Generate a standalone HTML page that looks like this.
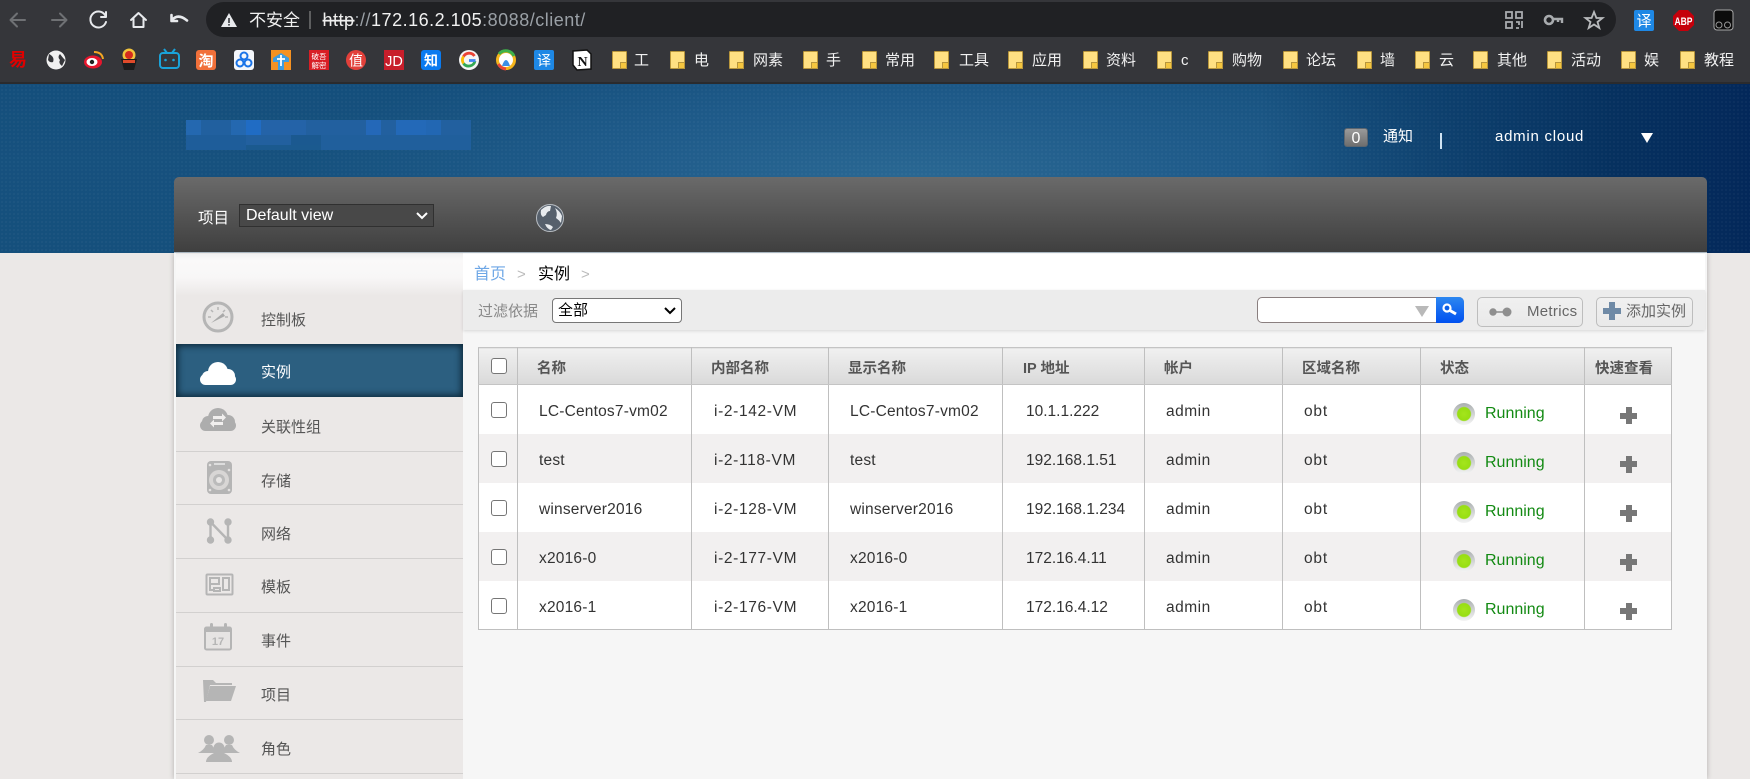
<!DOCTYPE html>
<html lang="zh-CN"><head><meta charset="utf-8"><title>实例</title>
<style>
*{box-sizing:border-box}
html,body{margin:0;padding:0;width:1750px;height:779px;overflow:hidden;background:#ebe8e7;font-family:"Liberation Sans","Noto Sans CJK SC",sans-serif}
.a{position:absolute}
.t{position:absolute;white-space:nowrap;line-height:20px;height:20px}
#toolbar{left:0;top:0;width:1750px;height:37px;background:#35363a}
#url{left:206px;top:2px;width:1410px;height:35px;background:#202124;border-radius:18px}
#bm{left:0;top:37px;width:1750px;height:47px;background:#35363a;border-bottom:2px solid #2a2b2e}
.bk{color:#f1f1f1;font-size:15px;top:51px}
.fd{position:absolute;top:51px;width:15px;height:18px;background:#ffe082;border:1px solid #b8963c;border-radius:1px}
.fd:after{content:"";position:absolute;right:-1px;bottom:-1px;width:5px;height:5px;background:#f5c63f;border:1px solid #b8963c}
#hdr{left:0;top:84px;width:1750px;height:169px;background-color:#165a8c;background-image:radial-gradient(rgba(255,255,255,.03) 1px,transparent 1.3px),linear-gradient(90deg,transparent 72%,#06315f 92%,#03285a 100%),radial-gradient(ellipse 620px 150px at 52% 58%,#2a6893 0,#1f5b8a 50%,rgba(22,80,125,.6) 100%),linear-gradient(#124c7a,#15527f 45%,#134e7b)}
#hdr{background-size:4px 4px,100% 100%,100% 100%,100% 100%}
#bar{left:174px;top:177px;width:1533px;height:76px;background:linear-gradient(#6a6a6a,#3f3f3f);border-radius:5px 5px 0 0;border-bottom:1px solid #a9b6c0}
#shell{left:174px;top:253px;width:1533px;height:526px;background:#f6f6f6;box-shadow:0 0 5px rgba(0,0,0,.25)}
#side{left:176px;top:253px;width:287px;height:526px;background:#ebe8e7}
#sidetop{left:176px;top:254px;width:287px;height:42px;background:linear-gradient(#f1f1f1,#faf9f9 15%,#f8f7f7 55%,#ebe8e7)}
.nav{left:261px;font-size:15px;color:#555}
.sep{position:absolute;left:176px;width:287px;height:1px;background:#d2d0cf}
#active{left:176px;top:344px;width:287px;height:53px;background:#2c5f80;box-shadow:inset 0 0 7px 2px #0e2a3b}
#crumb{left:463px;top:254px;width:1242px;height:36px;background:#fff}
#filter{left:463px;top:290px;width:1242px;height:40px;background:#ececec;box-shadow:0 1px 3px rgba(0,0,0,.13)}
select{appearance:none;-webkit-appearance:none;outline:0;font-family:"Liberation Sans","Noto Sans CJK SC",sans-serif}
.btn{position:absolute;top:297px;height:30px;border:1px solid #bdbdbd;border-radius:5px;background:linear-gradient(#f0f0f0,#e9e9e9)}
table{position:absolute;left:478px;top:347px;width:1193px;border-collapse:collapse;table-layout:fixed;font-size:15.5px;color:#333}
th,td{border-left:1px solid #bfbfbf;border-right:1px solid #bfbfbf;padding:0;text-align:left;white-space:nowrap;position:relative}
th{height:37px;background:linear-gradient(#f0f0f0,#d9d9d9);font-size:14.5px;font-weight:700;color:#555;padding-left:19px;padding-top:3px;border-top:1px solid #c4c4c4;border-bottom:1px solid #c4c4c4}
td{height:49px;padding-top:6px;padding-left:21px;background:#fff}
td:nth-child(2),td:nth-child(4){letter-spacing:.2px}
td:nth-child(3){letter-spacing:.65px;padding-left:22px}
td:nth-child(6){letter-spacing:.5px}
td:nth-child(7){letter-spacing:.8px}
tr:nth-child(even) td{background:#f2f0f0}
tbody tr:last-child td{border-bottom:1px solid #bfbfbf}
th:first-child,td:first-child{padding:0}
input[type=checkbox]{appearance:none;-webkit-appearance:none;position:absolute;left:12px;width:16px;height:16px;margin:0;background:#fff;border:1px solid #767676;border-radius:3px}
td input[type=checkbox]{top:17px}th input[type=checkbox]{top:10px}
td.st{padding-left:64px;color:#138a13;padding-top:10px;font-size:16px}
.led{position:absolute;left:32px;top:18px;width:22px;height:22px;border-radius:50%;background:radial-gradient(circle,#a4e51c 0,#97de12 6.500px,rgba(200,200,200,0) 7.500px),linear-gradient(#a9aeaf,#d9dbdb 60%,#f4f4f4)}
.pl{position:absolute;left:35px;top:22px;width:17px;height:17px;background:linear-gradient(#777,#777) center/17px 6px no-repeat,linear-gradient(#777,#777) center/6px 17px no-repeat}
</style></head><body>
<div class="a" id="hdr"></div>
<svg class="a" style="left:186px;top:120px" width="290" height="34"><g>
<rect x="0" y="0" width="285" height="30" fill="#22609f"/>
<rect x="0" y="0" width="15" height="15" fill="#2468b0"/><rect x="15" y="0" width="30" height="15" fill="#21609f"/><rect x="45" y="0" width="15" height="15" fill="#2468b0"/><rect x="60" y="0" width="15" height="15" fill="#206cc4"/><rect x="75" y="0" width="45" height="15" fill="#2463a8"/><rect x="180" y="0" width="15" height="15" fill="#2468b8"/><rect x="210" y="0" width="30" height="15" fill="#2369b8"/><rect x="240" y="0" width="15" height="15" fill="#2267b3"/>
<rect x="0" y="15" width="60" height="15" fill="#1e5d9a"/><rect x="105" y="15" width="30" height="10" fill="#1b5990"/><rect x="135" y="15" width="150" height="15" fill="#205f9c"/>
<rect x="60" y="25" width="75" height="5" fill="#1b5a8f"/></g></svg>
<div class="a" style="left:1344px;top:128px;width:24px;height:19px;border-radius:3px;background:linear-gradient(#9a9a9a,#6e6e6e);border:1px solid #5c6670;color:#fff;font-size:16px;line-height:19px;text-align:center">0</div>
<div class="t" style="left:1383px;top:127px;font-size:15px;color:#fff">通知</div>
<div class="a" style="left:1440px;top:133px;width:2px;height:16px;background:#cfe3f2"></div>
<div class="t" style="left:1495px;top:127px;font-size:15px;color:#fff;letter-spacing:.75px">admin cloud</div>
<svg class="a" style="left:1640px;top:132px" width="14" height="11"><path d="M1 1H13L7 11Z" fill="#fff"/></svg>

<div class="a" id="shell"></div>
<div class="a" id="bar"></div>
<div class="t" style="left:198px;top:209px;font-size:15.5px;color:#fff">项目</div>
<select class="a" style="left:239px;top:204px;width:195px;height:23px;background:#484848;border:1px solid #303030;color:#fff;font-size:16px;padding:0 0 0 6px"><option>Default view</option></select>
<svg class="a" style="left:415px;top:210px" width="14" height="12"><path d="M2 3L7 8L12 3" fill="none" stroke="#fff" stroke-width="2"/></svg>
<svg class="a" style="left:535px;top:203px" width="30" height="30"><circle cx="15" cy="15" r="13.500" fill="#56606c" stroke="#b9bec4" stroke-width="1"/><path d="M6 7Q11 2 16 3L15 8Q12 8 11 12L8 14Q5 12 6 7ZM20 5Q25 8 27 13L26 20Q24 17 21 15Q23 10 20 5ZM10 21Q15 21 18 24L16 27Q12 26 10 21Z" fill="#e8ebee"/></svg>

<div class="a" id="side"></div>
<div class="a" id="sidetop"></div>
<div class="a" id="active"></div>
<div class="t nav" style="top:311px">控制板</div>
<div class="t nav" style="top:363px;color:#fff">实例</div>
<div class="t nav" style="top:418px">关联性组</div>
<div class="t nav" style="top:472px">存储</div>
<div class="t nav" style="top:525px">网络</div>
<div class="t nav" style="top:578px">模板</div>
<div class="t nav" style="top:632px">事件</div>
<div class="t nav" style="top:686px">项目</div>
<div class="t nav" style="top:740px">角色</div>
<div class="sep" style="top:451px"></div><div class="sep" style="top:504px"></div><div class="sep" style="top:558px"></div><div class="sep" style="top:612px"></div><div class="sep" style="top:666px"></div><div class="sep" style="top:719px"></div><div class="sep" style="top:773px"></div>
<svg class="a" style="left:0;top:0" width="470" height="779" fill="#b5b5b5">
<g><circle cx="218" cy="317" r="14" fill="#e6e4e3" stroke="#b5b5b5" stroke-width="3"/><path d="M211 323L223 313L225 316Z" fill="#a9a9a9"/><path d="M218 307v3M208 317h3M225 317h3M211 310l2 2M225 310l-2 2" stroke="#b5b5b5" stroke-width="1.500"/></g>
<g fill="#fff"><rect x="200" y="374" width="36" height="11" rx="5.500"/><circle cx="218" cy="372" r="10"/><circle cx="208" cy="377" r="6"/><circle cx="228" cy="376" r="7"/></g>
<g fill="#adadad"><rect x="200" y="420" width="36" height="11" rx="5.500"/><circle cx="218" cy="418" r="10"/><circle cx="208" cy="422" r="6"/><circle cx="228" cy="422" r="7"/><path d="M213 416h9v-2.500l4 4-4 4v-2.500h-9zM223 425h-9v2.500l-4-4 4-4v2.500h9z" fill="#f1efee"/></g>
<g><rect x="207" y="461" width="25" height="33" rx="4"/><circle cx="219" cy="480" r="10" fill="#d8d6d5"/><circle cx="219" cy="480" r="6" fill="#bbb"/><circle cx="219" cy="480" r="3" fill="#e8e6e5"/><rect x="214" y="463" width="11" height="2" fill="#ddd"/><circle cx="210" cy="465" r="1.300" fill="#e4e2e1"/><circle cx="229" cy="490" r="1.300" fill="#e4e2e1"/><circle cx="210" cy="490" r="1.300" fill="#e4e2e1"/><circle cx="229" cy="470" r="1.300" fill="#e4e2e1"/></g>
<g><path d="M210.500 522V540M210.500 522L228 540M228 522V540" stroke="#b5b5b5" stroke-width="2.400" fill="none"/><circle cx="210.500" cy="522" r="3.700"/><circle cx="228" cy="522" r="3.700"/><circle cx="210.500" cy="540" r="3.700"/><circle cx="228" cy="540" r="3.700"/></g>
<g fill="none" stroke="#b5b5b5" stroke-width="2"><rect x="206.500" y="574.500" width="26" height="20" rx="1"/><rect x="210" y="578" width="9" height="6"/><rect x="223" y="578" width="6" height="12"/><path d="M210 584v6h5"/><rect x="214" y="588" width="6" height="3"/></g>
<g><rect x="205" y="627.500" width="26" height="22" rx="1.500" fill="#e6e4e3" stroke="#b5b5b5" stroke-width="2"/><rect x="205" y="627" width="26" height="5"/><rect x="210" y="623" width="3" height="7" rx="1.500"/><rect x="224" y="623" width="3" height="7" rx="1.500"/><text x="218" y="645" text-anchor="middle" font-family="Liberation Sans" font-weight="700" font-size="11">17</text></g>
<g><path d="M203 680H213L216 683H232V685H210L206 702H204Z"/><path d="M210 686H236L231 701H206Z"/></g>
<g><circle cx="209" cy="740" r="5"/><circle cx="229" cy="740" r="5"/><path d="M198 753Q204 750 206 745H212Q214 750 222 753ZM216 753Q224 750 226 745H232Q234 750 240 753Z"/><circle cx="219" cy="748" r="5.500"/><path d="M206 762Q206 757 214 753H224Q232 757 232 762Z"/></g>
</svg>

<div class="a" id="crumb"></div>
<div class="t" style="left:474px;top:265px;font-size:16px;color:#6ea7e6">首页</div>
<div class="t" style="left:517px;top:265px;font-size:15px;color:#bbb">&gt;</div>
<div class="t" style="left:538px;top:265px;font-size:16px;color:#000">实例</div>
<div class="t" style="left:581px;top:265px;font-size:15px;color:#bbb">&gt;</div>
<div class="a" id="filter"></div>
<div class="t" style="left:478px;top:302px;font-size:15px;color:#888">过滤依据</div>
<select class="a" style="left:552px;top:298px;width:130px;height:25px;background:#fff;border:1px solid #777;border-radius:4px;color:#000;font-size:15px;padding:0 0 0 5px"><option>全部</option></select>
<svg class="a" style="left:663px;top:305px" width="14" height="12"><path d="M2 3L7 8L12 3" fill="none" stroke="#000" stroke-width="2"/></svg>
<div class="a" style="left:1257px;top:297px;width:207px;height:26px;background:#fff;border:1px solid #8a7f7f;border-radius:5px"></div>
<svg class="a" style="left:1414px;top:305px" width="16" height="13"><path d="M1 1H15L8 12Z" fill="#b9b9b9"/></svg>
<div class="a" style="left:1436px;top:297px;width:28px;height:26px;background:linear-gradient(#2d87f0,#0050f0);border-radius:0 5px 5px 0"></div>
<svg class="a" style="left:1440px;top:301px" width="20" height="18"><circle cx="7" cy="7" r="3.500" fill="#0a5fe8" stroke="#fff" stroke-width="2.200"/><path d="M10 9.500L16 13" stroke="#fff" stroke-width="3"/></svg>
<div class="btn" style="left:1477px;width:106px"></div>
<svg class="a" style="left:1486px;top:305px" width="30" height="14"><path d="M7 7H21" stroke="#8c8c8c" stroke-width="1.500"/><circle cx="7" cy="7" r="3.700" fill="#8f8f8f"/><circle cx="21" cy="7" r="4.500" fill="#8f8f8f"/></svg>
<div class="t" style="left:1527px;top:302px;font-size:15px;color:#666;letter-spacing:.3px">Metrics</div>
<div class="btn" style="left:1596px;width:97px"></div>
<svg class="a" style="left:1603px;top:302px" width="18" height="18"><path d="M6 0H12V6H18V12H12V18H6V12H0V6H6Z" fill="#6f8aa6"/></svg>
<div class="t" style="left:1626px;top:302px;font-size:15px;color:#666">添加实例</div>

<table>
<colgroup><col style="width:39px"><col style="width:174px"><col style="width:137px"><col style="width:174px"><col style="width:142px"><col style="width:138px"><col style="width:138px"><col style="width:164px"><col style="width:87px"></colgroup>
<thead><tr><th><input type="checkbox"></th><th>名称</th><th>内部名称</th><th>显示名称</th><th style="padding-left:20px">IP 地址</th><th>帐户</th><th>区域名称</th><th>状态</th><th style="padding-left:10px">快速查看</th></tr></thead>
<tbody>
<tr><td><input type="checkbox"></td><td>LC-Centos7-vm02</td><td>i-2-142-VM</td><td>LC-Centos7-vm02</td><td style="padding-left:23px">10.1.1.222</td><td>admin</td><td>obt</td><td class="st"><span class="led"></span>Running</td><td><span class="pl"></span></td></tr>
<tr><td><input type="checkbox"></td><td>test</td><td>i-2-118-VM</td><td>test</td><td style="padding-left:23px">192.168.1.51</td><td>admin</td><td>obt</td><td class="st"><span class="led"></span>Running</td><td><span class="pl"></span></td></tr>
<tr><td><input type="checkbox"></td><td>winserver2016</td><td>i-2-128-VM</td><td>winserver2016</td><td style="padding-left:23px">192.168.1.234</td><td>admin</td><td>obt</td><td class="st"><span class="led"></span>Running</td><td><span class="pl"></span></td></tr>
<tr><td><input type="checkbox"></td><td>x2016-0</td><td>i-2-177-VM</td><td>x2016-0</td><td style="padding-left:23px">172.16.4.11</td><td>admin</td><td>obt</td><td class="st"><span class="led"></span>Running</td><td><span class="pl"></span></td></tr>
<tr><td><input type="checkbox"></td><td>x2016-1</td><td>i-2-176-VM</td><td>x2016-1</td><td style="padding-left:23px">172.16.4.12</td><td>admin</td><td>obt</td><td class="st"><span class="led"></span>Running</td><td><span class="pl"></span></td></tr>
</tbody></table>

<div class="a" id="toolbar"></div>
<div class="a" id="url"></div>
<div class="a" id="bm"></div>
<svg class="a" style="left:0;top:0" width="1750" height="84" font-family="Liberation Sans,Noto Sans CJK SC,sans-serif">
<g fill="none" stroke-width="2" stroke-linecap="round" stroke-linejoin="round">
<path d="M25 20H11M17 13.500L10.500 20L17 26.500" stroke="#6f7174"/>
<path d="M52 20H66M60 13.500L66.500 20L60 26.500" stroke="#6f7174"/>
<path d="M105 15A8 8 0 1 0 106 22M106 12V17H101" stroke="#e8eaed"/>
<path d="M131 20L138.500 13L146 20M133.500 18.500V27H143.500V18.500" stroke="#e8eaed"/>
<path d="M172 20Q178 13 187 20.500M171.500 15V21H177" stroke="#e8eaed" stroke-width="2.600"/>
</g>
<path d="M229 13L237 27H221Z" fill="#e8eaed"/><rect x="228.200" y="18" width="1.600" height="5" fill="#35363a"/><rect x="228.200" y="24" width="1.600" height="1.600" fill="#35363a"/>
<text x="249" y="26" font-size="17" fill="#f1f1f1">不安全</text>
<rect x="309.500" y="11" width="1" height="18" fill="#9a9a9a"/>
<text x="322.500" y="26" font-size="18" letter-spacing=".5" fill="#9aa0a6"><tspan fill="#eee" text-decoration="line-through">http</tspan>://<tspan fill="#f1f1f1">172.16.2.105</tspan>:8088/client/</text>
<g fill="none" stroke="#a8abae" stroke-width="1.800"><rect x="1506" y="12" width="6" height="6"/><rect x="1516" y="12" width="6" height="6"/><rect x="1506" y="22" width="6" height="6"/><path d="M1516 22h3v3M1522 21v7M1516 28h3"/></g>
<circle cx="1549" cy="20" r="4" fill="none" stroke="#a8abae" stroke-width="2.600"/><path d="M1553 19H1562V23M1558 19V22" fill="none" stroke="#a8abae" stroke-width="2.400"/>
<path d="M1594 12L1596.400 18H1602.500L1597.500 22L1599.300 28L1594 24.500L1588.700 28L1590.500 22L1585.500 18H1591.600Z" fill="none" stroke="#b8babc" stroke-width="1.800"/>
<rect x="1634" y="10" width="20" height="21" rx="2" fill="#1e88e5"/><text x="1644" y="26" font-size="15" fill="#fff" text-anchor="middle">译</text>
<path d="M1679 10H1688L1694 16V25L1688 31H1679L1673 25V16Z" fill="#c5000b"/><text x="1683.500" y="25" font-size="11" font-weight="700" fill="#fff" text-anchor="middle" textLength="18" lengthAdjust="spacingAndGlyphs">ABP</text>
<rect x="1714" y="10" width="19" height="20" rx="3" fill="#0c0c0c" stroke="#a8a8a8"/><circle cx="1719" cy="25" r="3" fill="none" stroke="#999"/><circle cx="1727.500" cy="25" r="3" fill="none" stroke="#999"/>

<text x="18" y="66" font-size="18" font-weight="700" fill="#e00000" text-anchor="middle">易</text>
<circle cx="56" cy="60" r="9.500" fill="#f1f1f1"/><path d="M49 54Q55 57 53 62Q50 63 48 60ZM60 54Q63 58 65 60L62 66Q58 63 60 60Q57 57 60 54Z" fill="#35363a"/>
<ellipse cx="93" cy="62" rx="9" ry="6.500" fill="#e6162d"/><ellipse cx="92" cy="62" rx="5.500" ry="4" fill="#fff"/><circle cx="92" cy="62" r="2.200" fill="#222"/><path d="M94 52Q102 52 103 59" fill="none" stroke="#f5a623" stroke-width="2"/>
<circle cx="129" cy="55" r="6.500" fill="#f2c43c"/><circle cx="129" cy="55" r="4" fill="#d42b1e"/><path d="M121 59H137L134 70H124Z" fill="#1c1c1c"/><rect x="123" y="60" width="12" height="3" fill="#e04a2a"/>
<rect x="160" y="53" width="19" height="15" rx="3" fill="none" stroke="#1aa3d9" stroke-width="2"/><path d="M164 49L167 53M175 49L172 53" stroke="#1aa3d9" stroke-width="2"/><circle cx="165.500" cy="60" r="1.300" fill="#1aa3d9"/><circle cx="173.500" cy="60" r="1.300" fill="#1aa3d9"/>
<rect x="196" y="50" width="20" height="20" rx="3" fill="#f1703a"/><text x="206" y="66" font-size="15" font-weight="700" fill="#fff" text-anchor="middle">淘</text>
<rect x="234" y="50" width="20" height="20" rx="3" fill="#f4f7fb"/><circle cx="244" cy="56" r="3.500" fill="none" stroke="#1a74e8" stroke-width="2"/><circle cx="240" cy="63" r="3.500" fill="none" stroke="#1a74e8" stroke-width="2"/><circle cx="248" cy="63" r="3.500" fill="none" stroke="#1a74e8" stroke-width="2"/>
<rect x="271" y="50" width="20" height="20" fill="#f59222"/><path d="M273 58L281 53L289 58V62H284V70H278V62H273Z" fill="#3f9de0"/><path d="M277 59H285M281 55V66" stroke="#fff" stroke-width="1.800"/>
<rect x="309" y="50" width="20" height="20" fill="#d81e25"/><text x="319" y="59" font-size="7.500" fill="#fff" text-anchor="middle">破吾</text><text x="319" y="68" font-size="7.500" fill="#fff" text-anchor="middle">解密</text>
<circle cx="356" cy="60" r="10" fill="#e2403a"/><text x="356" y="65.500" font-size="14" fill="#fff" text-anchor="middle">值</text>
<rect x="384" y="50" width="20" height="20" fill="#c81e2b"/><text x="394" y="66" font-size="14.500" fill="#fff" text-anchor="middle">JD</text>
<rect x="421" y="50" width="20" height="20" rx="3" fill="#0a7bf0"/><text x="431" y="65.500" font-size="14" font-weight="700" fill="#fff" text-anchor="middle">知</text>
<circle cx="469" cy="60" r="10" fill="#f5f5f5"/><g fill="none" stroke-width="2.800"><path d="M474.500 56A6.500 6.500 0 0 0 463.500 56.500" stroke="#ea4335"/><path d="M463.500 56.500A6.500 6.500 0 0 0 463.500 63.500" stroke="#fbbc05"/><path d="M463.500 63.500A6.500 6.500 0 0 0 475 61" stroke="#34a853"/><path d="M469 60.500H475.500" stroke="#4285f4"/></g>
<circle cx="506" cy="60" r="8.500" fill="#fff" stroke="#f5b51c" stroke-width="3"/><path d="M499 54A9 9 0 0 1 514 56" fill="none" stroke="#3fb24a" stroke-width="3"/><path d="M498.500 64A9 9 0 0 0 506 69" fill="none" stroke="#e8473a" stroke-width="3"/><path d="M502 66Q506 54 510 66Z" fill="#3a8fe8"/>
<rect x="534" y="50" width="20" height="20" rx="2" fill="#1e88e5"/><text x="544" y="65.500" font-size="14" fill="#fff" text-anchor="middle">译</text>
<path d="M573 51L587 50L591 54V69L577 70L573 65Z" fill="#fff" stroke="#111" stroke-width="1.500"/><text x="582.500" y="66" font-family="Liberation Serif" font-weight="700" font-size="14" fill="#111" text-anchor="middle">N</text>
</svg>
<span class="fd" style="left:612px"></span><div class="t bk" style="left:634px">工</div>
<span class="fd" style="left:670px"></span><div class="t bk" style="left:694px">电</div>
<span class="fd" style="left:729px"></span><div class="t bk" style="left:753px">网素</div>
<span class="fd" style="left:803px"></span><div class="t bk" style="left:826px">手</div>
<span class="fd" style="left:862px"></span><div class="t bk" style="left:885px">常用</div>
<span class="fd" style="left:934px"></span><div class="t bk" style="left:959px">工具</div>
<span class="fd" style="left:1008px"></span><div class="t bk" style="left:1032px">应用</div>
<span class="fd" style="left:1083px"></span><div class="t bk" style="left:1106px">资料</div>
<span class="fd" style="left:1157px"></span><div class="t bk" style="left:1181px">c</div>
<span class="fd" style="left:1208px"></span><div class="t bk" style="left:1232px">购物</div>
<span class="fd" style="left:1283px"></span><div class="t bk" style="left:1306px">论坛</div>
<span class="fd" style="left:1357px"></span><div class="t bk" style="left:1380px">墙</div>
<span class="fd" style="left:1415px"></span><div class="t bk" style="left:1439px">云</div>
<span class="fd" style="left:1473px"></span><div class="t bk" style="left:1497px">其他</div>
<span class="fd" style="left:1547px"></span><div class="t bk" style="left:1571px">活动</div>
<span class="fd" style="left:1621px"></span><div class="t bk" style="left:1644px">娱</div>
<span class="fd" style="left:1680px"></span><div class="t bk" style="left:1704px">教程</div>
</body></html>
